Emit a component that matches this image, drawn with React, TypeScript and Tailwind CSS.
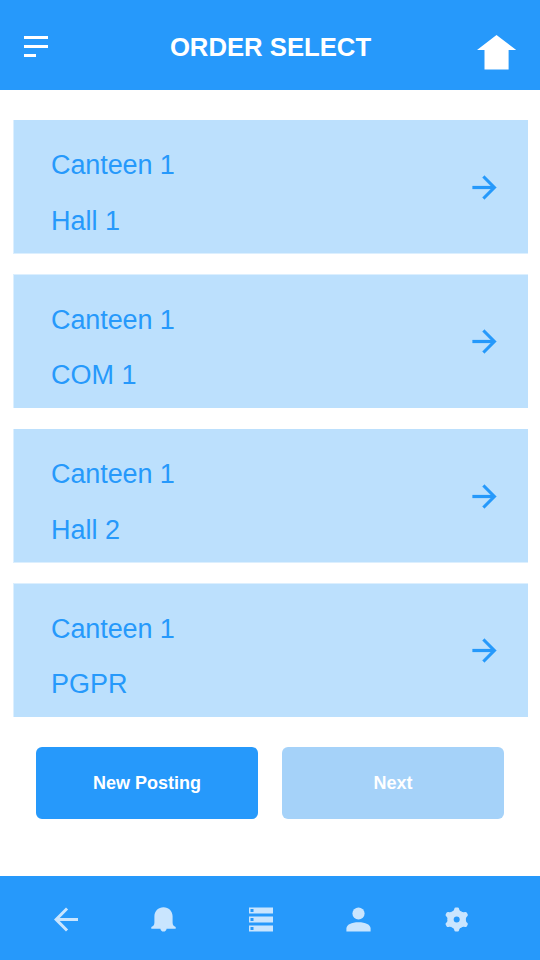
import React from "react";

const orders = [
  { canteen: "Canteen 1", place: "Hall 1", box: "border-b", gap: "mt-[24px]", arrow: "mt-[31px]" },
  { canteen: "Canteen 1", place: "COM 1", box: "mt-[20px] border-t", gap: "mt-[23px]", arrow: "mt-[30px]" },
  { canteen: "Canteen 1", place: "Hall 2", box: "mt-[21px] border-b", gap: "mt-[24px]", arrow: "mt-[31px]" },
  { canteen: "Canteen 1", place: "PGPR", box: "mt-[20px] border-t", gap: "mt-[23px]", arrow: "mt-[30px]" },
];

const ARROW = "M8 0L6.59 1.41 12.17 7H0v2h12.17l-5.58 5.59L8 16l8-8z";

function Gear() {
  return (
    <svg className="ml-[72px]" width="26" height="27" viewBox="-12.7 -13.5 26 27">
      <mask id="hub">
        <rect x="-13" y="-14" width="26" height="28" fill="white" />
        <circle r="3" fill="black" />
      </mask>
      <g mask="url(#hub)" fill="currentColor">
        <circle r="9.1" />
        {[0, 60, 120, 180, 240, 300].map((a) => (
          <path key={a} transform={`rotate(${a})`} d="M-5 -7.6C-3.2 -8.6 -2.6 -9.4 -2.4 -10.8Q-2.1 -12.1 -1 -12.1H1Q2.1 -12.1 2.4 -10.8C2.6 -9.4 3.2 -8.6 5 -7.6Z" />
        ))}
      </g>
    </svg>
  );
}

export default function App() {
  return (
    <div className="flex h-[960px] w-[540px] flex-col bg-white font-['Liberation_Sans',Arial,sans-serif]">
      <header className="flex h-[90px] items-start justify-between bg-[#2699fb] pl-6 pr-[23px] text-white">
        <svg className="mt-9" width="40" height="21" viewBox="0 0 40 21" fill="currentColor">
          <path d="M0 0h24v3H0zM0 9h24v3H0zM0 18h12v3H0z" />
        </svg>
        <h1 className="mt-[32px] text-[25.7px] font-bold leading-[30px]">ORDER SELECT</h1>
        <svg className="mt-[34px]" width="40" height="36" viewBox="0 0 40 36" fill="currentColor">
          <path d="M19.5 1L39.2 16H31.6V35.5H7.5V16H0z" />
        </svg>
      </header>

      <main className="flex flex-1 flex-col pl-[13px] pr-3 pt-[30px]">
        {orders.map((o) => (
          <section key={o.place} className={`flex h-[134px] justify-between border-l border-[#dceffe] bg-[#bce0fd] pl-[37px] pr-[31px] pt-[24px] text-[#2699fb] ${o.box}`}>
            <div className="text-[27px] leading-[32px]">
              <p className="mt-[5px] tracking-[-0.1px]">{o.canteen}</p>
              <p className={o.gap}>{o.place}</p>
            </div>
            <svg className={o.arrow} width="25" height="25" viewBox="0 0 16.667 16.667" fill="currentColor">
              <path transform="translate(.333 .333)" d={ARROW} stroke="currentColor" strokeWidth="0.15" />
            </svg>
          </section>
        ))}
        <div className="mt-[30px] flex gap-6 pl-[23px] text-[18px] font-bold text-white">
          <button className="h-[72px] w-[222px] rounded-[6px] bg-[#2699fb]">New Posting</button>
          <button className="h-[72px] w-[222px] rounded-[6px] bg-[#a5d2f9]">Next</button>
        </div>
      </main>

      <nav className="flex h-[84px] items-start bg-[#2699fb] pl-[53px] pt-[30px] text-[#c9e5fe]">
        <svg width="26" height="26" viewBox="0 0 26 26" fill="currentColor">
          <path transform="translate(25 1.5) scale(-1.5 1.5)" d={ARROW} />
        </svg>
        <svg className="ml-[71px]" width="27" height="26" viewBox="0 0 27 26" fill="currentColor">
          <path d="M13.5 1.2C8.3 1.2 4.4 5.1 4.4 10.2V16.5C4.4 19 3.3 20.2 1.3 21V22.8H10.4C10.7 24.7 11.8 25.6 13.5 25.6S16.3 24.7 16.6 22.8H25.7V21C23.7 20.2 22.6 19 22.6 16.5V10.2C22.6 5.1 18.7 1.2 13.5 1.2Z" />
        </svg>
        <svg className="ml-[72px]" width="24" height="26" viewBox="0 0 24 26" fill="currentColor" fillRule="evenodd">
          <path d="M0 1.5h24v6H0zM1.5 3v3h3V3zM0 10.5h24v6H0zM1.5 12v3h3v-3zM0 19.5h24v6H0zM1.5 21v3h3v-3z" />
        </svg>
        <svg className="ml-[72px]" width="27" height="26" viewBox="0 0 27 26" fill="currentColor">
          <circle cx="13.5" cy="7.5" r="6.1" />
          <path d="M1.4 25.5V22.5C1.4 18.5 6.5 16.2 13.5 16.2S25.6 18.5 25.6 22.5V25.5Z" />
        </svg>
        <Gear />
      </nav>
    </div>
  );
}
